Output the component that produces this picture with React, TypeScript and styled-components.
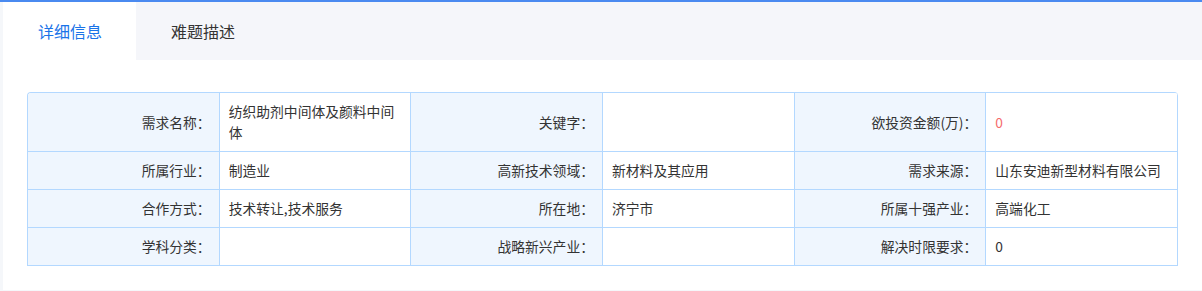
import React from "react";
import styled, { createGlobalStyle } from "styled-components";

const Global = createGlobalStyle`
  html, body { margin: 0; padding: 0; background: #f5f7fa; }
  body { font-family: "Noto Sans CJK SC", "Liberation Sans", sans-serif; color: #333; }
  * { box-sizing: border-box; }
`;

const TopBar = styled.div`
  height: 2px;
  background: #4a8af0;
`;

const Card = styled.div`
  margin-left: 3px;
  background: #fff;
  padding-bottom: 24px;
`;

const Tabs = styled.div`
  display: flex;
  height: 58px;
  background: #f5f6fa;
`;

const Tab = styled.div<{ $active?: boolean }>`
  display: flex;
  align-items: center;
  padding: 0 34px 0 35px;
  font-size: 16px;
  background: ${(p) => (p.$active ? "#fff" : "transparent")};
  color: ${(p) => (p.$active ? "#1a73e8" : "#333")};
`;

const Body = styled.div`
  padding: 32px 24px 0 24px;
`;

const Grid = styled.div`
  display: grid;
  grid-template-columns: repeat(6, 1fr);
  border-top: 1px solid #b3d8ff;
  border-left: 1px solid #b3d8ff;
  border-radius: 4px 4px 0 0;
  overflow: hidden;
`;

const Cell = styled.div<{ $label?: boolean; $red?: boolean }>`
  display: flex;
  align-items: center;
  justify-content: ${(p) => (p.$label ? "flex-end" : "flex-start")};
  text-align: ${(p) => (p.$label ? "right" : "left")};
  padding: 8px ${(p) => (p.$label ? "8px" : "10px")} 8px ${(p) => (p.$label ? "10px" : "9px")};
  min-height: 38px;
  font-size: 13.8px;
  line-height: 21px;
  background: ${(p) => (p.$label ? "#eff6fe" : "#fff")};
  color: ${(p) => (p.$red ? "#f56c6c" : "#333")};
  border-right: 1px solid #b3d8ff;
  border-bottom: 1px solid #b3d8ff;
  word-break: break-all;
`;

type Item = { label: string; value: string; red?: boolean };

const rows: Item[][] = [
  [
    { label: "需求名称：", value: "纺织助剂中间体及颜料中间体" },
    { label: "关键字：", value: "" },
    { label: "欲投资金额(万)：", value: "0", red: true },
  ],
  [
    { label: "所属行业：", value: "制造业" },
    { label: "高新技术领域：", value: "新材料及其应用" },
    { label: "需求来源：", value: "山东安迪新型材料有限公司" },
  ],
  [
    { label: "合作方式：", value: "技术转让,技术服务" },
    { label: "所在地：", value: "济宁市" },
    { label: "所属十强产业：", value: "高端化工" },
  ],
  [
    { label: "学科分类：", value: "" },
    { label: "战略新兴产业：", value: "" },
    { label: "解决时限要求：", value: "0" },
  ],
];

export default function App() {
  return (
    <>
      <Global />
      <TopBar />
      <Card>
        <Tabs>
          <Tab $active>详细信息</Tab>
          <Tab>难题描述</Tab>
        </Tabs>
        <Body>
          <Grid>
            {rows.flat().map((it, i) => (
              <React.Fragment key={i}>
                <Cell $label>{it.label}</Cell>
                <Cell $red={it.red}>{it.value}</Cell>
              </React.Fragment>
            ))}
          </Grid>
        </Body>
      </Card>
    </>
  );
}
